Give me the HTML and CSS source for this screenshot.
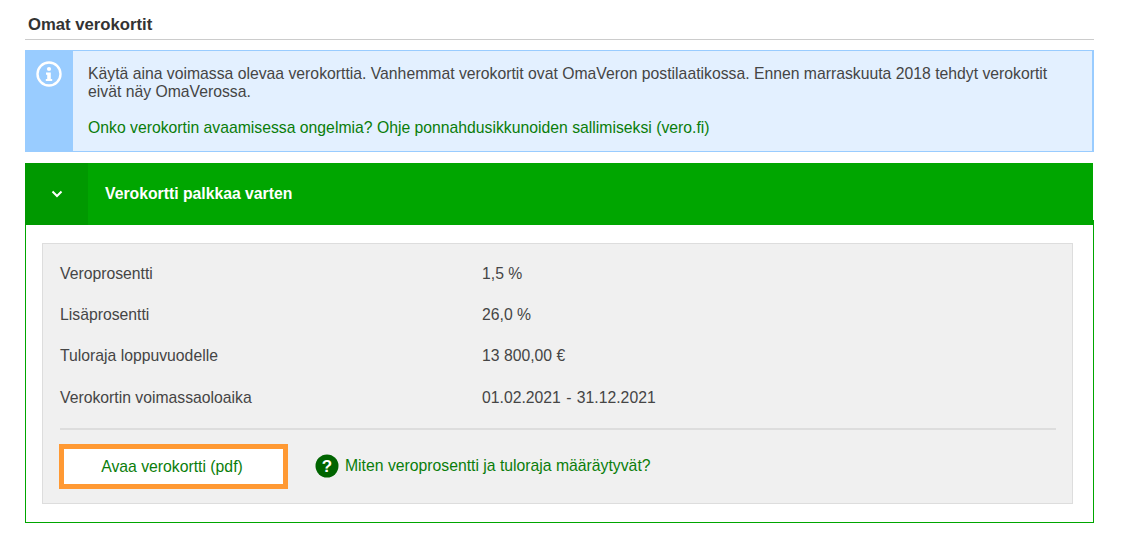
FILE: index.html
```html
<!DOCTYPE html>
<html lang="fi">
<head>
    <meta charset="UTF-8">
    <meta name="viewport" content="width=device-width, initial-scale=1.0">
    <title>Omat verokortit</title>
    <link rel="stylesheet" href="styles.css">
</head>
<body>
    <div class="page">
        <h2 class="page-title">Omat verokortit</h2>

        <div class="notice">
            <div class="notice-side">
                <svg class="notice-icon" viewBox="0 0 26 26" width="26" height="26">
                    <circle cx="13" cy="13" r="11.5" fill="none" stroke="#fff" stroke-width="2.4"/>
                    <circle cx="13" cy="8" r="2.1" fill="#fff"/>
                    <path d="M10 11.5h4.8v6.4h1.4v2.2H9.8v-2.2h1.4v-4.2H10z" fill="#fff"/>
                </svg>
            </div>
            <div class="notice-body">
                <p>Käytä aina voimassa olevaa verokorttia. Vanhemmat verokortit ovat OmaVeron postilaatikossa. Ennen marraskuuta 2018 tehdyt verokortit eivät näy OmaVerossa.</p>
                <p><a href="#">Onko verokortin avaamisessa ongelmia? Ohje ponnahdusikkunoiden sallimiseksi (vero.fi)</a></p>
            </div>
        </div>

        <div class="card-header">
            <div class="card-toggle">
                <svg viewBox="0 0 12 8" width="12" height="8">
                    <path d="M1.5 1.5L6 6l4.5-4.5" fill="none" stroke="#fff" stroke-width="2"/>
                </svg>
            </div>
            <div class="card-title">Verokortti palkkaa varten</div>
        </div>

        <div class="card">
            <div class="details">
                <div class="detail-row"><span class="detail-label">Veroprosentti</span><span>1,5 %</span></div>
                <div class="detail-row"><span class="detail-label">Lisäprosentti</span><span>26,0 %</span></div>
                <div class="detail-row"><span class="detail-label">Tuloraja loppuvuodelle</span><span>13 800,00 €</span></div>
                <div class="detail-row"><span class="detail-label">Verokortin voimassaoloaika</span><span>01.02.2021 <span class="date-sep">-</span> 31.12.2021</span></div>

                <div class="actions">
                    <a class="open-button" href="#">Avaa verokortti (pdf)</a>
                    <a class="help-link" href="#">
                        <svg viewBox="0 0 24 24" width="24" height="24">
                            <circle cx="12" cy="12" r="11.5" fill="#006400"/>
                            <text class="help-mark" x="12" y="18" text-anchor="middle">?</text>
                        </svg>
                        Miten veroprosentti ja tuloraja määräytyvät?
                    </a>
                </div>
            </div>
        </div>
    </div>
</body>
</html>
```

FILE: styles.css
```css
body {
    margin: 0;
    background: #fff;
    color: #454545;
    font-family: 'Liberation Sans', Arial, sans-serif;
    font-size: 15.75px;
}

a {
    color: #0a7d0a;
    text-decoration: none;
}

.page {
    width: 1069px;
    margin-left: 25px;
}

.page-title {
    margin: 0 0 10px;
    padding: 15px 3px 5px;
    height: 19px;
    line-height: 19px;
    font-size: 16.7px;
    font-weight: bold;
    color: #333;
    border-bottom: 1px solid #ccc;
}

.notice {
    display: flex;
    height: 102px;
    box-sizing: border-box;
    background: #e3f0ff;
    border: 1px solid #99ccff;
    border-width: 1px 2px 1px 0;
}

.notice-side {
    flex: 0 0 48px;
    background: #99ccff;
    display: flex;
    justify-content: center;
    padding-top: 10px;
    box-sizing: border-box;
}

.notice-body {
    padding: 14px 15px 0;
    line-height: 18px;
}

.notice-body p {
    margin: 0 0 18px;
}

.card-header {
    position: relative;
    z-index: 1;
    display: flex;
    width: 1068px;
    height: 62px;
    margin-top: 11px;
    background: #00a600;
    color: #fff;
}

.card-toggle {
    flex: 0 0 63px;
    background: #009900;
    display: flex;
    align-items: center;
    justify-content: center;
}

.card-title {
    padding-left: 17px;
    line-height: 62px;
    font-weight: bold;
}

.card {
    margin-top: -5px;
    padding: 22px 20px 18px 16px;
    border: 1px solid #00a600;
}

.details {
    box-sizing: border-box;
    height: 261px;
    padding: 8.5px 16px 0 17px;
    background: #f0f0f0;
    border: 1px solid #ddd;
}

.detail-row {
    display: flex;
    height: 41.4px;
    line-height: 41.4px;
}

.detail-label {
    flex: 0 0 422px;
}

.date-sep {
    margin: 0 1px;
}

.actions {
    display: flex;
    align-items: center;
    margin-top: 9.5px;
    padding-top: 14px;
    border-top: 2px solid #ddd;
}

.open-button {
    box-sizing: border-box;
    width: 229px;
    height: 45px;
    margin-left: -1px;
    padding-right: 3px;
    line-height: 35px;
    text-align: center;
    background: #fff;
    border: 5px solid #ff9933;
}

.help-link {
    display: flex;
    align-items: center;
    gap: 6px;
    margin-left: 27px;
}

.help-mark {
    font-size: 17px;
    font-weight: bold;
    fill: #fff;
}
```
